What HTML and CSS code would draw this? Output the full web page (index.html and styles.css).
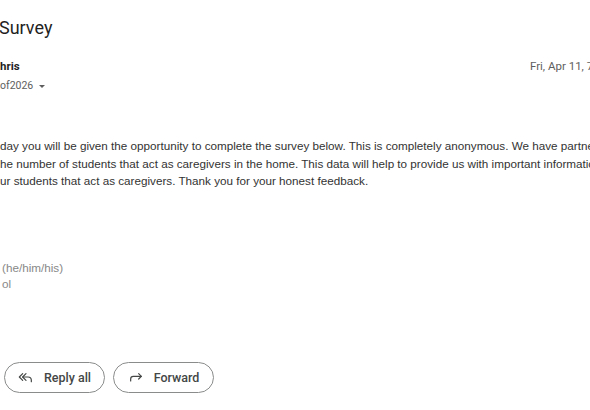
FILE: index.html
```html
<!DOCTYPE html>
<html>
    <head>
        <title>Survey</title>
        <meta charset="utf-8" />
        <link rel="stylesheet" href="styles.css">
    </head>
    <body>
        <main class="mail">
            <h2 class="subject">Survey</h2>

            <div class="meta">
                <div class="sender">
                    <span class="name">hris</span>
                    <span class="to">of2026 <span class="caret"></span></span>
                </div>
                <span class="date">Fri, Apr 11, 7:</span>
            </div>

            <div class="message">
                <p>
                    day you will be given the opportunity to complete the survey below. This is completely anonymous. We have partnered<br>
                    he number of students that act as caregivers in the home. This data will help to provide us with important information<br>
                    ur students that act as caregivers. Thank you for your honest feedback.
                </p>
                <p class="signature">
                    (he/him/his)<br>
                    ol
                </p>
            </div>

            <div class="actions">
                <button class="pill">
                    <svg width="16" height="16" viewBox="0 0 24 24" fill="none" stroke="currentColor" stroke-width="1.8" stroke-linejoin="round" stroke-linecap="round">
                        <path d="M7 7l-5 5 5 5" />
                        <path d="M12 7l-5 5 5 5" />
                        <path d="M7 12h8a5 5 0 0 1 5 5v2" />
                    </svg>
                    Reply all
                </button>
                <button class="pill">
                    <svg width="16" height="16" viewBox="0 0 24 24" fill="none" stroke="currentColor" stroke-width="1.8" stroke-linejoin="round" stroke-linecap="round">
                        <path d="M4 18v-3a4 4 0 0 1 4-4h12" />
                        <path d="M16 7l4 4-4 4" />
                    </svg>
                    Forward
                </button>
            </div>
        </main>
    </body>
</html>
```

FILE: styles.css
```css
html, body {
    margin: 0;
    padding: 0;
    background: #fff;
    overflow: hidden;
}
body {
    width: 590px;
    height: 410px;
}
.mail {
    display: flex;
    flex-direction: column;
}
.subject {
    margin: 16px 0 0 -1px;
    font-family: Roboto, sans-serif;
    font-size: 18px;
    font-weight: 400;
    color: #1f1f1f;
    line-height: 24px;
}
.meta {
    display: flex;
    justify-content: space-between;
    align-items: flex-start;
    margin-top: 19px;
    white-space: nowrap;
}
.sender {
    display: flex;
    flex-direction: column;
}
.name {
    font-family: Roboto, sans-serif;
    font-size: 11.5px;
    font-weight: 700;
    color: #1f1f1f;
    line-height: 14px;
}
.to {
    margin-top: 6px;
    font-family: Roboto, sans-serif;
    font-size: 10.5px;
    color: #5e5e5e;
    line-height: 14px;
}
.caret {
    display: inline-block;
    margin-left: 3px;
    vertical-align: middle;
    border-left: 3.5px solid transparent;
    border-right: 3.5px solid transparent;
    border-top: 3.5px solid #5e5e5e;
}
.date {
    margin-top: 0;
    margin-right: -6px;
    font-family: Roboto, sans-serif;
    font-size: 11.5px;
    color: #5e5e5e;
    line-height: 14px;
}
.message {
    margin-top: 44px;
    font-family: "Liberation Sans", Arial, sans-serif;
    font-size: 11.7px;
    color: #333;
    white-space: nowrap;
}
.message p {
    margin: 0;
    line-height: 17.5px;
}
.signature {
    margin-top: 70px !important;
    padding-left: 2px;
    color: #888;
    line-height: 16px !important;
}
.actions {
    display: flex;
    gap: 8px;
    margin-top: 70px;
    padding-left: 4px;
}
.pill {
    display: flex;
    align-items: center;
    justify-content: center;
    gap: 10px;
    width: 101px;
    height: 31px;
    padding: 0;
    border: 1px solid #8a8c8b;
    border-radius: 16px;
    background: #fff;
    color: #444746;
    font-family: Roboto, sans-serif;
    font-size: 12.5px;
    font-weight: 500;
}
```
